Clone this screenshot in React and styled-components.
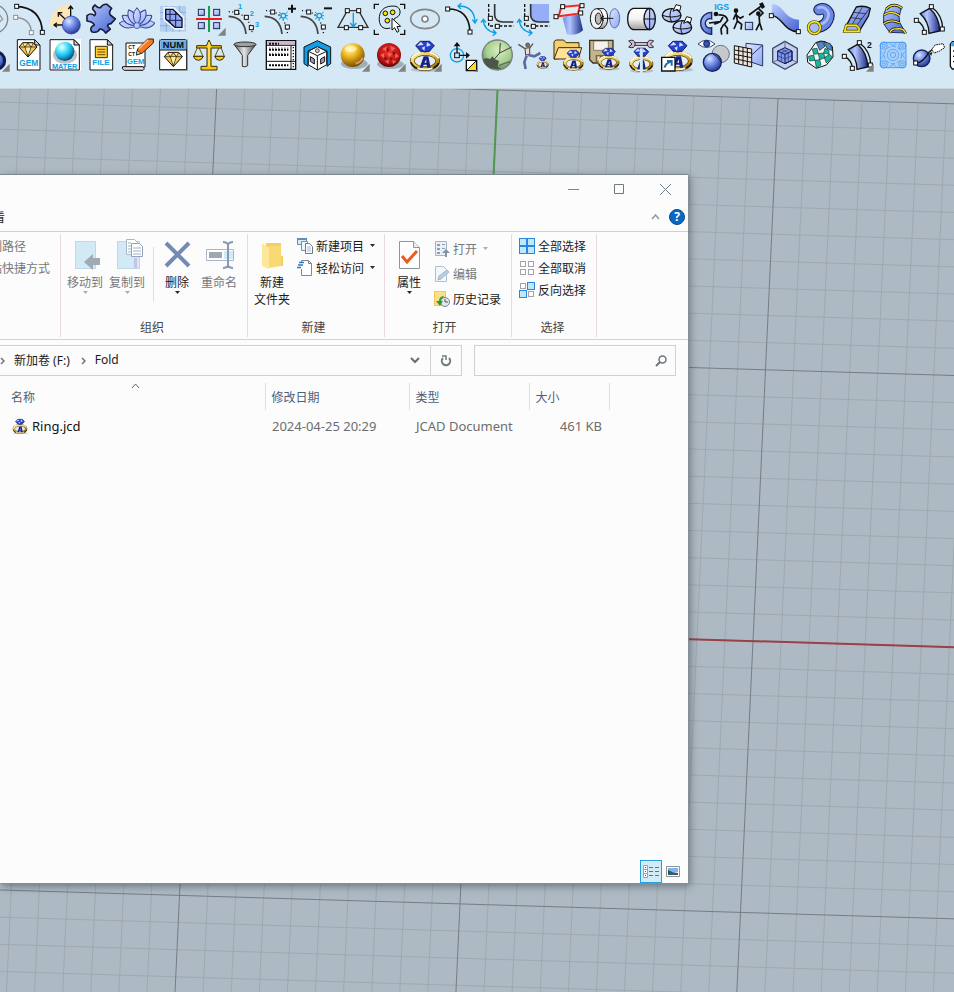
import styled, { createGlobalStyle, css } from "styled-components";

const GlobalStyle = createGlobalStyle`
  * {
    box-sizing: border-box;
  }

  body {
    margin: 0;
    font-family: "Noto Sans", "Noto Sans CJK SC", sans-serif;
    font-size: 12px;
    color: #1b1b1b;
  }

  button {
    margin: 0;
    padding: 0;
    border: 0;
    background: none;
    color: inherit;
    font: inherit;
  }
`;

/* ---------- layout ---------- */

const Page = styled.div`
  display: flex;
  flex-direction: column;
  min-height: 100vh;
  overflow: hidden;
`;

const Toolbar = styled.header`
  padding: 1px 0 15px;
  background: #d4e8f5;
  border-bottom: 1px solid #c9d2d5;
  overflow: hidden;
`;

const ToolRow = styled.div`
  display: flex;
  height: 36px;
  margin-left: -25px;
`;

const Tool = styled.button`
  flex: 0 0 36px;
  height: 36px;

  svg {
    display: block;
    width: 36px;
    height: 36px;
  }
`;

const Viewport = styled.main`
  position: relative;
  display: flex;
  flex: 1;
  padding: 85px 266px 109px 0;
  background: #adbac3;
`;

const GridSvg = styled.svg`
  position: absolute;
  inset: 0;
  width: 100%;
  height: 100%;
`;

const Explorer = styled.section`
  position: relative;
  display: flex;
  flex: 1;
  flex-direction: column;
  min-width: 0;
  background: #fcfcfc;
  border-top: 1px solid #7d888f;
  box-shadow: 1px 1px 0 #858f95, 2px 3px 8px rgba(40, 50, 60, 0.5);
`;

const TitleBar = styled.div`
  display: flex;
  justify-content: flex-end;
  height: 28px;
`;

const CaptionButton = styled.button`
  width: 46px;

  svg {
    display: block;
    margin: 0 auto;
  }
`;

const TabRow = styled.div`
  display: flex;
  align-items: center;
  height: 29px;
  padding-right: 2px;
  border-bottom: 1px solid #ccd1d4;
`;

const Tab = styled.button`
  margin-left: -19px;
  margin-right: auto;
`;

const TabTool = styled.button`
  display: flex;
  align-items: center;
  justify-content: center;
  width: 22px;
  height: 22px;
  padding-left: 4px;
`;

const Ribbon = styled.div`
  display: flex;
  height: 108px;
  padding: 2px 0;
  border-bottom: 1px solid #d0d5d6;
`;

const Group = styled.div`
  display: flex;
  flex-direction: column;
  flex: none;
  padding: 1px ${(p) => p.$right || 10}px 0 ${(p) => p.$left || 3}px;
  border-right: 1px solid #ead9df;
`;

const ClippedGroup = styled(Group)`
  align-items: flex-end;
  width: 61px;
  padding-left: 0;
  overflow: hidden;
`;

const GroupBody = styled.div`
  display: flex;
  flex: 1;
`;

const GroupName = styled.div`
  height: 18px;
  line-height: 18px;
  color: #444;
  text-align: center;
`;

const dim = css`
  color: #77787a;
`;

const BigButton = styled.button`
  display: flex;
  flex-direction: column;
  align-items: center;
  width: 42px;
  padding-top: 3px;
  line-height: 17px;
  white-space: nowrap;
  ${(p) => p.$dim && dim}

  > svg:first-child {
    flex: none;
    margin-bottom: 4px;
  }
`;

const Divider = styled.div`
  width: 1px;
  height: 55px;
  margin: 12px 2px 0 5px;
  background: #ead9df;
`;

const SmallList = styled.div`
  display: flex;
  flex-direction: column;
  align-items: ${(p) => (p.$end ? "flex-end" : "flex-start")};
  margin-left: ${(p) => p.$gap || 0}px;
  padding-top: ${(p) => (p.$tall ? 1 : 0)}px;
`;

const SmallButton = styled.button`
  display: flex;
  align-items: center;
  gap: 3px;
  height: ${(p) => (p.$tall ? 25 : 22)}px;
  padding-right: ${(p) => p.$inset || 0}px;
  white-space: nowrap;
  ${(p) => p.$dim && dim}
`;

const NavRow = styled.div`
  display: flex;
  gap: 12px;
  padding: 5px 12px 7px 0;
`;

const AddressBar = styled.nav`
  display: flex;
  align-items: center;
  flex: 1;
  height: 31px;
  border: 1px solid #d0d1d6;
  border-left: 0;
`;

const Crumb = styled.a`
  margin: 0 11px 0 9px;
  padding-bottom: 2px;
  color: #1b1b1b;
  text-decoration: none;
`;

const AddressButton = styled.button`
  display: flex;
  align-items: center;
  justify-content: center;
  align-self: stretch;
  width: 31px;
  margin-left: ${(p) => (p.$push ? "auto" : 0)};
  border-left: ${(p) => (p.$push ? 0 : 1)}px solid #d0d1d6;
`;

const SearchBox = styled.label`
  display: flex;
  align-items: center;
  width: 202px;
  padding-right: 8px;
  border: 1px solid #d0d1d6;
`;

const SearchInput = styled.input`
  flex: 1;
  min-width: 0;
  border: 0;
  outline: 0;
  background: none;
  font: inherit;
`;

const FileTable = styled.table`
  width: 100%;
  table-layout: fixed;
  border-collapse: collapse;
`;

const HeadCell = styled.th`
  position: relative;
  width: ${(p) => p.$width || "auto"};
  height: 27px;
  padding: 0 0 0 ${(p) => (p.$first ? 11 : 6)}px;
  border-right: ${(p) => (p.$last ? 0 : 1)}px solid #ead9df;
  color: #4c607a;
  font-weight: normal;
  text-align: left;
`;

const SortMark = styled.svg`
  position: absolute;
  top: 0;
  left: 131px;
`;

const Cell = styled.td`
  height: 32px;
  padding: 0 7px;
  color: #6d6d6d;
  font-size: 13px;
  text-align: ${(p) => (p.$right ? "right" : "left")};
  white-space: nowrap;
`;

const FileName = styled.a`
  display: flex;
  align-items: center;
  gap: 4px;
  padding-left: 5px;
  color: #111;
  text-decoration: none;
`;

const StatusBar = styled.footer`
  display: flex;
  justify-content: flex-end;
  margin-top: auto;
  padding-right: 4px;
`;

const ViewButton = styled.button`
  display: flex;
  align-items: center;
  justify-content: center;
  width: 22px;
  height: 23px;
  background: ${(p) => (p.$active ? "#d3ebf7" : "none")};
  border: 1px solid ${(p) => (p.$active ? "#26a0da" : "transparent")};
`;

/* ---------- construction plane ---------- */

const ORIGIN = [497.5, 1];
const H = [28.05, 0.85];
const V = [-1.25, 27.13];

const at = (i, j) => [
  ORIGIN[0] + i * H[0] + j * V[0],
  ORIGIN[1] + i * H[1] + j * V[1],
];

const range = (from, to) =>
  Array.from({ length: to - from + 1 }, (_, n) => from + n);

function GridLine({ from, to, color, width = 1 }) {
  const [x1, y1] = at(...from);
  const [x2, y2] = at(...to);
  return <line x1={x1} y1={y1} x2={x2} y2={y2} stroke={color} strokeWidth={width} />;
}

const MINOR = "#9ea9b0";
const MAJOR = "#777c86";

function ConstructionPlane() {
  const cols = range(-20, 60);
  const rows = range(0, 50);
  const minor = (n) => n % 10 !== 0;
  const major = (n) => n % 10 === 0;
  return (
    <GridSvg aria-hidden="true">
      <defs>
        <linearGradient id="blue" x1="0" y1="0" x2="1" y2="1">
          <stop offset="0" stopColor="#b9ccff" />
          <stop offset="1" stopColor="#4360cf" />
        </linearGradient>
        <linearGradient id="pale" x1="0" y1="0" x2="1" y2="1">
          <stop offset="0" stopColor="#dfe8ff" />
          <stop offset="1" stopColor="#8da6f4" />
        </linearGradient>
        <linearGradient id="tube" x1="0" y1="0" x2="1" y2="0">
          <stop offset="0" stopColor="#6f8de8" />
          <stop offset="0.35" stopColor="#b4c5ff" />
          <stop offset="1" stopColor="#1c2c86" />
        </linearGradient>
        <linearGradient id="steel" x1="0" y1="0" x2="1" y2="0">
          <stop offset="0" stopColor="#555" />
          <stop offset="0.45" stopColor="#e4e4e4" />
          <stop offset="1" stopColor="#4c4c4c" />
        </linearGradient>
        <linearGradient id="barrel" x1="0" y1="0" x2="0" y2="1">
          <stop offset="0" stopColor="#fff" />
          <stop offset="0.5" stopColor="#f4f4f4" />
          <stop offset="1" stopColor="#9c9c9c" />
        </linearGradient>
        <linearGradient id="gold" x1="0" y1="0" x2="1" y2="1">
          <stop offset="0" stopColor="#fff6b0" />
          <stop offset="0.5" stopColor="#e3bb3a" />
          <stop offset="1" stopColor="#8b6200" />
        </linearGradient>
        <radialGradient id="ball" cx="0.35" cy="0.3" r="0.75">
          <stop offset="0" stopColor="#dbe6ff" />
          <stop offset="0.4" stopColor="#7c98f2" />
          <stop offset="1" stopColor="#20348e" />
        </radialGradient>
        <radialGradient id="goldBall" cx="0.38" cy="0.25" r="0.8">
          <stop offset="0" stopColor="#fff7b8" />
          <stop offset="0.4" stopColor="#efb91f" />
          <stop offset="1" stopColor="#6b4200" />
        </radialGradient>
        <radialGradient id="redBall" cx="0.5" cy="0.4" r="0.6">
          <stop offset="0" stopColor="#ee3a30" />
          <stop offset="0.7" stopColor="#bb1414" />
          <stop offset="1" stopColor="#5d0303" />
        </radialGradient>
        <radialGradient id="cyanBall" cx="0.35" cy="0.28" r="0.75">
          <stop offset="0" stopColor="#fff" />
          <stop offset="0.25" stopColor="#7df2ff" />
          <stop offset="0.65" stopColor="#17b3e6" />
          <stop offset="1" stopColor="#034a74" />
        </radialGradient>
        <radialGradient id="greenBall" cx="0.55" cy="0.35" r="0.7">
          <stop offset="0" stopColor="#d9efc0" />
          <stop offset="0.6" stopColor="#a6cd90" />
          <stop offset="1" stopColor="#54774e" />
        </radialGradient>
      </defs>
      {cols.filter(minor).map((i) => (
        <GridLine key={`c${i}`} from={[i, 0]} to={[i, 50]} color={MINOR} />
      ))}
      {rows.filter(minor).map((j) => (
        <GridLine key={`r${j}`} from={[-20, j]} to={[60, j]} color={MINOR} />
      ))}
      {cols.filter(major).map((i) => (
        <GridLine key={`c${i}`} from={[i, 0]} to={[i, 50]} color={MAJOR} />
      ))}
      {rows.filter(major).map((j) => (
        <GridLine key={`r${j}`} from={[-20, j]} to={[60, j]} color={MAJOR} />
      ))}
      <GridLine from={[0, 20]} to={[60, 20]} color="#9c4048" width={2} />
      <GridLine from={[0, 0]} to={[0, 20]} color="#4f9a50" width={2} />
    </GridSvg>
  );
}

/* ---------- tool icons, drawn on a 108 unit square ---------- */

const BLACK = "#111";
const CYAN = "#0a9fe4";

const line = { fill: "none", stroke: BLACK, strokeWidth: 4 };
const cyan = { fill: "none", stroke: CYAN, strokeWidth: 4 };

function Handles({ points, color = BLACK }) {
  return points.map(([x, y]) => (
    <rect key={`${x}-${y}`} x={x - 6} y={y - 6} width="12" height="12" fill="#fff" stroke={color} strokeWidth="3" />
  ));
}

const Flyout = () => <path d="M104 80v24H81z" fill="#828282" />;

function Label({ x, y, size = 24, color = CYAN, children }) {
  return (
    <text x={x} y={y} fill={color} fontSize={size} fontWeight="bold" fontFamily="Liberation Sans, sans-serif" textAnchor="middle">
      {children}
    </text>
  );
}

function Ring({ x = 54, y = 54, s = 1 }) {
  return (
    <g transform={`translate(${x} ${y}) scale(${s})`}>
      <ellipse cx="2" cy="42" rx="44" ry="7" fill="#8f989d" opacity="0.5" />
      <ellipse cx="0" cy="16" rx="38" ry="23" fill="#e9edf0" stroke="#4a380c" strokeWidth="14" />
      <ellipse cx="0" cy="16" rx="38" ry="23" fill="none" stroke="url(#gold)" strokeWidth="10" />
      <path d="M-41 8Q-32 -8 -14 -10M14 -10Q36 -4 41 8M-22 38Q0 44 22 38" stroke="#fffde4" strokeWidth="5" fill="none" />
      <path d="M-42 20Q-36 34 -24 38M26 36Q38 32 41 22" stroke="#241803" strokeWidth="5" fill="none" />
      <path d="M-16 36L-4 2H10L17 36H7L5 27H-4L-7 36z" fill="#152088" />
      <path d="M-2 21H4L4 11z" fill="#e9edf0" />
      <path d="M-28 -30L-14 -43H14L28 -30L14 -14Q0 -8 -14 -14z" fill="#2440cc" stroke="#141d66" strokeWidth="3" />
      <path d="M-12 -42L-4 -32L-24 -30zM6 -41L18 -31L4 -27zM-10 -24L0 -28L-2 -14z" fill="#d3ddff" />
    </g>
  );
}

function Gem({ x, y }) {
  return (
    <g transform={`translate(${x} ${y})`} stroke={BLACK} strokeWidth="3" strokeLinejoin="round">
      <path d="M-27 -8L-16 -21H16L27 -8L0 22z" fill="#f4c955" />
      <path d="M-27 -8H27M-16 -20L-9 -8L0 20L9 -8L16 -20M-9 -8L0 -20L9 -8" fill="none" strokeWidth="2" />
      <path d="M-7 -6H7L0 14zM-14 -18H-4L-10 -11zM4 -18H12L10 -11z" fill="#fff0b8" stroke="none" />
    </g>
  );
}

const Doc = ({ x = 19, w = 68 }) => (
  <>
    <path d={`M${x} 8h${w - 16}l16 16v75h${-w}z`} fill="#fff" stroke={BLACK} strokeWidth="3" />
    <path d={`M${x + w - 16} 8v16h16z`} fill="#ccc" stroke={BLACK} strokeWidth="3" />
  </>
);

const Sweep = ({ mark }) => (
  <>
    <path d="M9 29Q66 30 74 101" {...line} strokeDasharray="3 7" />
    <path d="M5 46Q52 48 57 99" {...line} stroke="#444" strokeWidth="5" />
    <Handles points={[[29, 33], [73, 78]]} />
    <circle cx="61" cy="44" r="7" {...cyan} />
    <path d="M48 33l6 5M74 33l-6 5M48 55l6-5M74 55l-6-5M47 44h6M69 44h6" {...cyan} strokeWidth="3" />
    <path d={mark} stroke={BLACK} strokeWidth="6" />
  </>
);

const Corner = ({ filled }) => (
  <>
    {filled && <path d="M46 9H102V64H68Q46 60 46 42z" fill="#96adf7" />}
    <path d="M29 9V75H104" {...line} strokeDasharray="9 5" />
    <path d="M47 9V42Q48 62 72 63H103" {...line} stroke="#333" strokeWidth="5" />
    <Handles points={[[34, 52], [55, 76]]} />
    <path d="M13 56Q14 88 50 96M6 65l7-10 8 9M42 86l9 10-10 8" {...cyan} />
  </>
);

const Band = () => (
  <>
    <path d="M28 38L56 22Q86 50 86 90L54 97Q54 62 28 38z" fill="url(#tube)" stroke={BLACK} strokeWidth="4" />
    <path d="M62 18Q94 42 95 82M17 58Q38 70 40 92" {...line} />
    <Handles points={[[61, 17], [94, 84], [16, 58], [40, 94]]} />
  </>
);

const topTools = [
  ["圆", <>
    <circle cx="55" cy="54" r="43" {...line} stroke="#858585" />
    <path d="M70 36L83 54L67 70" {...line} stroke="#999" />
  </>],
  ["弧线", <>
    <path d="M17 16Q90 20 94 92" {...line} strokeWidth="5" />
    <path d="M14 49Q58 52 61 92" {...line} stroke="#8c8c8c" />
    <Handles points={[[17, 16], [94, 94]]} />
    <Handles points={[[14, 49], [61, 95]]} color="#8c8c8c" />
  </>],
  ["旋转", <>
    <path d="M9 76Q10 12 73 10V76z" fill="#fde5b5" />
    <path d="M71 70V17M71 70L35 36M71 72H22M64 24l7-9 7 9M34 47V35h12M30 65l-9 7 9 7" {...line} />
    <circle cx="73" cy="72" r="27" fill="url(#ball)" stroke="#243a9c" strokeWidth="2" />
  </>],
  ["拼接", <path d="M36 12Q44 22 52 20Q60 8 72 10L86 22Q76 34 82 42L97 54L84 68Q74 68 74 76L82 84L68 96Q60 84 50 84Q44 98 26 92Q18 80 34 72Q30 62 12 60L12 44Q24 34 34 44Q42 38 32 28Q24 22 36 12z" fill="url(#blue)" stroke="#1c1f3a" strokeWidth="5" strokeLinejoin="round" />],
  ["莲花", <>
    {[-82, 82, -56, 56, -28, 28, 0].map((a) => (
      <path key={a} d="M54 20Q76 42 54 74Q32 42 54 20" transform={`rotate(${a} 54 74)`} fill="url(#pale)" stroke="#33449c" strokeWidth="3" />
    ))}
    <circle cx="54" cy="74" r="9" fill="url(#pale)" stroke="#33449c" strokeWidth="2" />
  </>],
  ["网格", <>
    <path d="M15 15H93V92H15z" fill="#b5cff0" />
    <path d="M34 15V92M54 15V92M74 15V92M15 34H93M15 54H93M15 74H93" stroke="#89addd" strokeWidth="3" />
    <path d="M25 18H58L88 48V86H58L25 58z" fill="#eef4ff" />
    <path d="M32 25H54L81 52V79H60L32 54z" fill="#8ea5f4" stroke={BLACK} strokeWidth="4" />
    <path d="M45 25V65M62 34V79M32 40H68M34 58H81" stroke="#151c50" strokeWidth="3" />
  </>],
  ["阵列", <>
    {[[31, 34], [77, 34], [31, 74], [77, 74]].map(([x, y]) => (
      <rect key={`${x}${y}`} x={x - 9} y={y - 9} width="18" height="18" fill="url(#pale)" stroke="#20284f" strokeWidth="3" />
    ))}
    <path d="M54 15V93" stroke="#17a04a" strokeWidth="6" />
    <path d="M15 54H93" stroke="#ed1c24" strokeWidth="6" />
    <Flyout />
  </>],
  ["编号点", <>
    <path d="M5 32Q70 34 76 101" {...line} strokeDasharray="3 7" />
    <path d="M5 46Q52 48 57 99" {...line} stroke="#444" strokeWidth="5" />
    <Handles points={[[29, 34], [58, 49], [73, 80]]} />
    <Label x={39} y={23} size={22}>1</Label>
    <Label x={74} y={45} size={22}>2</Label>
    <Label x={90} y={79} size={22}>3</Label>
  </>],
  ["加点", <Sweep mark="M75 23H99M87 11V35" />],
  ["减点", <Sweep mark="M75 22H99" />],
  ["投影", <>
    <path d="M37 29H71L99 79H9z" {...line} stroke="#333" />
    <path d="M55 35V76M46 66l9 11 9-11" {...cyan} />
    <Handles points={[[37, 29], [71, 29], [34, 80], [77, 80]]} />
  </>],
  ["选取", <>
    <path d="M10 24V10H24M87 10H101V24M10 86V100H24M87 100H101V86" {...line} />
    <path d="M58 81C28 90 20 62 27 38C34 18 56 13 75 16C92 22 90 44 77 49Q66 52 69 64" {...line} strokeWidth="3" />
    <circle cx="43" cy="37" r="7" fill="#f7e600" stroke={BLACK} strokeWidth="3" />
    <circle cx="65" cy="34" r="7" fill="#f7e600" stroke={BLACK} strokeWidth="3" />
    <circle cx="49" cy="59" r="7" fill="#f7e600" stroke={BLACK} strokeWidth="3" />
    <path d="M63 52V87L71 80L78 94L84 90L78 77L89 76z" fill="#fff" stroke={BLACK} strokeWidth="3" />
  </>],
  ["椭圆", <>
    <ellipse cx="54" cy="54" rx="43" ry="29" {...line} stroke="#868686" strokeWidth="5" />
    <circle cx="54" cy="54" r="9" fill="#fff" stroke="#868686" strokeWidth="5" />
  </>],
  ["曲线", <>
    <path d="M15 24Q78 24 81 92" {...line} strokeWidth="5" />
    <path d="M45 15Q94 14 96 64M55 7L45 15L54 24M88 56L96 66L103 54" {...cyan} />
    <Handles points={[[14, 24], [81, 93]]} />
  </>],
  ["圆角", <Corner />],
  ["填充圆角", <Corner filled />],
  ["拉伸", <>
    <path d="M35 51Q62 34 86 44L96 88Q76 106 48 100z" fill="url(#tube)" />
    <path d="M31 18L87 13L81 38L23 46z" fill="#e6eaf0" stroke="#f1281e" strokeWidth="6" />
    <Handles points={[[35, 17], [93, 14], [15, 47], [89, 36]]} />
  </>],
  ["切割管", <>
    <path d="M31 23H50Q62 30 62 52T48 82H31z" fill="url(#barrel)" stroke={BLACK} strokeWidth="3" />
    <ellipse cx="29" cy="53" rx="19" ry="30" fill="#f2f2f2" stroke={BLACK} strokeWidth="3" />
    <ellipse cx="34" cy="53" rx="9" ry="17" fill="#b9b9b9" stroke={BLACK} strokeWidth="3" />
    <ellipse cx="83" cy="52" rx="15" ry="29" fill="url(#pale)" stroke="#5f6ca8" strokeWidth="3" />
    <path d="M79 52H43M51 45L41 52L51 59" {...line} strokeWidth="3" />
  </>],
  ["圆柱", <>
    <path d="M30 22H80V86H30Q14 80 14 54T30 22z" fill="url(#barrel)" stroke={BLACK} strokeWidth="4" />
    <ellipse cx="80" cy="54" rx="17" ry="32" fill="url(#pale)" stroke={BLACK} strokeWidth="4" />
    <path d="M80 22V86M63 54H97" {...line} strokeWidth="3" />
  </>],
  ["球体映射", <>
    {[[38, 43], [70, 79]].map(([x, y]) => (
      <g key={x}>
        <ellipse cx={x} cy={y} rx="28" ry="20" fill="url(#pale)" stroke={BLACK} strokeWidth="4" />
        <path d={`M${x} ${y - 20}Q${x - 10} ${y} ${x} ${y + 20}M${x - 28} ${y}Q${x} ${y + 10} ${x + 28} ${y}`} {...line} strokeWidth="3" />
        <path d={`M${x + 4} ${y - 12}L${x + 13} ${y - 32}L${x + 28} ${y - 28}L${x + 24} ${y - 13}L${x + 16} ${y - 18}z`} fill="#fff" stroke={BLACK} strokeWidth="3" />
      </g>
    ))}
  </>],
  ["导入IGS", <>
    <path d="M50 34A33 33 0 1 0 50 100V80A14 14 0 1 1 50 54z" fill="url(#blue)" stroke="#18265e" strokeWidth="4" />
    <circle cx="63" cy="39" r="7" fill={BLACK} />
    <path d="M70 42Q94 40 98 58L88 70L97 82V100M86 70L78 84L80 101M84 48L76 62L42 66M76 62L58 70" {...line} strokeWidth="5" />
    <Label x={80} y={27} size={26}>IGS</Label>
  </>],
  ["敲打", <>
    <circle cx="15" cy="29" r="7" fill={BLACK} />
    <path d="M15 36L19 60L9 84M19 60L32 70L30 86M15 42L28 52L38 46M14 40L7 56" {...line} strokeWidth="5" />
    <rect x="43" y="64" width="22" height="22" fill="url(#pale)" stroke="#20284f" strokeWidth="3" />
    <circle cx="82" cy="38" r="7" fill={BLACK} />
    <path d="M84 44L86 66L75 88M86 66L93 88M84 48L96 36L82 22M54 42L92 14" {...line} strokeWidth="5" />
    <path d="M84 8L93 24L102 18L95 4z" fill={BLACK} />
  </>],
  ["曲面带", <>
    <path d="M15 10C46 4 52 56 96 56V94C48 92 46 46 14 44z" fill="url(#blue)" />
    <path d="M14 43C46 46 48 90 94 93" {...line} strokeWidth="4" />
    <Handles points={[[13, 44], [94, 92]]} />
  </>],
  ["管道", <>
    <path d="M48 26C66 18 86 34 74 58Q66 76 40 80" fill="none" stroke="#16204f" strokeWidth="34" strokeLinecap="round" />
    <path d="M48 26C66 18 86 34 74 58Q66 76 40 80" fill="none" stroke="#6c86e6" strokeWidth="28" strokeLinecap="round" />
    <path d="M46 20C66 14 86 34 72 56Q64 68 44 72" fill="none" stroke="#a9bcff" strokeWidth="8" strokeLinecap="round" />
    <circle cx="34" cy="80" r="18" fill="#a7baf8" stroke="#4c4200" strokeWidth="9" />
    <circle cx="34" cy="80" r="18" fill="none" stroke="#f8e71c" strokeWidth="5" />
  </>],
  ["放样", <>
    <path d="M16 88L24 70L52 18Q74 12 94 22L88 46L60 92z" fill="url(#blue)" stroke={BLACK} strokeWidth="4" />
    <path d="M36 50L68 54M44 34L80 38M92 22L54 72M70 18L40 70" {...line} strokeWidth="2" />
    <path d="M17 91L22 73H52L60 81V91z" fill="#9db4fa" stroke="#4c4200" strokeWidth="9" />
    <path d="M17 91L22 73H52L60 81V91z" fill="none" stroke="#f8e71c" strokeWidth="5" />
  </>],
  ["肋骨放样", <>
    <path d="M34 20Q56 2 80 18L72 46L74 64L92 96L44 94L26 68L26 42z" fill="url(#blue)" stroke="#1d2b70" strokeWidth="3" />
    {["M34 24Q56 2 82 22", "M26 42Q50 26 74 44", "M26 68Q48 52 74 66", "M44 96Q50 82 64 84Q86 80 92 98"].map((d) => (
      <g key={d} fill="none">
        <path d={d} stroke={BLACK} strokeWidth="8" />
        <path d={d} stroke="#f8e71c" strokeWidth="4" />
      </g>
    ))}
  </>],
  ["弯曲面", <Band />],
];

const bottomTools = [
  ["戒圈", <>
    <circle cx="63" cy="71" r="26" fill="url(#ball)" stroke="#111a52" strokeWidth="9" />
    <Flyout />
  </>],
  ["宝石文件", <>
    <Doc />
    <Gem x={51} y={38} />
    <Label x={53} y={86} size={25}>GEM</Label>
  </>],
  ["材质", <>
    <rect x="6" y="6" width="96" height="96" fill="#fff" />
    <Doc x={9} w={88} />
    <ellipse cx="54" cy="54" rx="36" ry="26" fill="#777" opacity="0.45" />
    <circle cx="53" cy="43" r="29" fill="url(#cyanBall)" />
    <Label x={53} y={95} size={22}>MATER</Label>
  </>],
  ["文件", <>
    <Doc x={21} />
    <path d="M37 28H73V62H37z" fill="#f9cf3c" stroke="#3c2b00" strokeWidth="3" />
    <path d="M43 37H67M43 45H67M43 53H67" stroke="#7c4a00" strokeWidth="3" />
    <Label x={54} y={85} size={24}>FILE</Label>
  </>],
  ["宝石清单", <>
    <path d="M21 18H78V90H21z" fill="#fff" stroke={BLACK} strokeWidth="3" />
    <path d="M11 89H70Q80 93 72 100H16Q6 95 11 89z" fill="#ddd3dd" stroke={BLACK} strokeWidth="3" />
    <Label x={38} y={37} size={15} color={BLACK}>CT</Label>
    <Label x={38} y={56} size={15} color={BLACK}>CT</Label>
    <Label x={50} y={82} size={23}>GEM</Label>
    <path d="M52 54L56 36L86 6H103V18L70 48z" fill="#f47920" stroke="#3a1c05" strokeWidth="3" />
    <path d="M60 35L88 8" stroke="#ffc48a" strokeWidth="4" />
    <path d="M52 54L55 40L66 49z" fill="#f8d9a5" stroke={BLACK} strokeWidth="2" />
  </>],
  ["宝石数量", <>
    <rect x="12" y="6" width="87" height="96" fill="#a9b7c1" />
    <path d="M14 12L18 8H91L95 12V98H14z" fill="#fff" stroke={BLACK} strokeWidth="3" />
    <path d="M16 10H94V38H16z" fill="#66acef" />
    <path d="M14 39H96" {...line} strokeWidth="3" />
    <Label x={55} y={34} size={28} color={BLACK}>NUM</Label>
    <Gem x={55} y={67} />
  </>],
  ["称重", <>
    <path d="M19 32L8 58H36L24 32M84 32L72 58H100L90 32" {...line} stroke="#6d5200" strokeWidth="3" />
    <path d="M17 26H46L54 9L62 26H91V33H60V88H78V99H30V88H48V33H17z" fill="#f7c80e" stroke="#3c2c00" strokeWidth="3" />
    <path d="M7 58H37Q32 70 22 70T7 58zM71 58H101Q96 70 86 70T71 58z" fill="#f7c80e" stroke="#3c2c00" strokeWidth="3" />
    <path d="M54 16V88" stroke="#fff2a2" strokeWidth="3" />
  </>],
  ["筛选", <>
    <path d="M21 22L46 55V88Q54 92 62 86V55L87 22z" fill="url(#steel)" stroke="#333" strokeWidth="3" />
    <ellipse cx="54" cy="22" rx="33" ry="7" fill="#a0a0a0" stroke="#333" strokeWidth="3" />
  </>],
  ["列表", <>
    <path d="M10 11H98V97H10z" fill="#fff" stroke={BLACK} strokeWidth="4" />
    <path d="M12 13H96V23H12z" fill="#cbb6d0" />
    <path d="M10 25H98M10 73H98M84 25V97" {...line} strokeWidth="3" />
    <path d="M18 20H48M18 38H76M18 54H76M18 85H76" {...line} strokeWidth="6" strokeDasharray="6 3" />
    <path d="M18 33H76M18 49H76" {...line} strokeWidth="2" strokeDasharray="4 5" />
    <path d="M91 30V70M91 78V94" {...line} strokeDasharray="4 5" />
  </>],
  ["立方体", <>
    <path d="M55 11L95 30V80L84 88V42L55 30L27 42V88L15 80V30z" fill="#109ee8" stroke={BLACK} strokeWidth="3" />
    <path d="M55 29L83 43V83L55 99L28 83V43z" fill="#fff" stroke={BLACK} strokeWidth="3" />
    <path d="M28 43L55 56L83 43M55 56V99" {...line} strokeWidth="3" />
    <circle cx="55" cy="41" r="6" fill="#c8bcd8" stroke={BLACK} strokeWidth="2" />
    <path d="M34 59L46 66V81L34 73zM65 66L77 59V74L65 81z" fill="#a998c7" stroke={BLACK} strokeWidth="3" />
  </>],
  ["黄金材质", <>
    <ellipse cx="58" cy="80" rx="40" ry="16" fill="#6d7477" opacity="0.5" />
    <circle cx="53" cy="54" r="36" fill="url(#goldBall)" />
    <ellipse cx="47" cy="36" rx="18" ry="10" fill="#fff8d0" opacity="0.65" />
    <path d="M62 80Q78 76 84 62" stroke="#f7a58a" strokeWidth="6" fill="none" opacity="0.8" />
    <Flyout />
  </>],
  ["红宝石材质", <>
    <ellipse cx="58" cy="82" rx="40" ry="14" fill="#6d7477" opacity="0.5" />
    <circle cx="54" cy="54" r="36" fill="url(#redBall)" />
    <path d="M34 36L48 28L44 42zM58 26L74 34L62 42zM28 54L40 48L38 64zM50 48L64 50L54 60zM74 48L84 58L72 64zM42 72L54 68L52 82zM64 70L76 72L66 82z" fill="#ff7a6c" opacity="0.75" />
    <path d="M48 30L56 40L48 46zM64 44L74 46L68 56zM38 66L46 58L48 68zM58 60L66 66L58 70z" fill="#6d0505" opacity="0.8" />
    <Flyout />
  </>],
  ["戒指", <>
    <Ring x={54} y={56} />
    <Flyout />
  </>],
  ["操作轴", <>
    <circle cx="42" cy="55" r="20" {...cyan} />
    <path d="M42 55V20M42 55H78" {...line} />
    <path d="M32 28L42 15L52 28zM69 45L81 55L69 65z" fill={BLACK} />
    <rect x="35" y="48" width="14" height="14" fill="#d7e2ff" stroke={BLACK} strokeWidth="3" />
    <path d="M70 70H101V101H70z" fill="#fff" stroke={BLACK} strokeWidth="4" />
    <path d="M99 72V99H72z" fill="#f8df1a" />
    <path d="M99 72L72 99" {...line} strokeWidth="3" />
    <path d="M97 102l8-8v10h-10z" fill="#777" />
  </>],
  ["渲染球", <>
    <circle cx="55" cy="54" r="45" fill="url(#greenBall)" stroke="#7a817e" strokeWidth="4" />
    <path d="M12 66Q24 62 34 66L40 58L46 66L60 72L56 88L66 97L34 94Q14 84 12 66z" fill="#4b5648" />
    <path d="M46 66L62 48L98 30M62 48L64 18" stroke="#39423a" strokeWidth="3" fill="none" />
    <path d="M60 86Q76 78 94 74" stroke="#5d7453" strokeWidth="5" fill="none" />
  </>],
  ["快速动作", <>
    <circle cx="38" cy="24" r="6" fill="#8e6d62" stroke="#333" strokeWidth="2" />
    <path d="M30 34L44 32L44 52L32 54z" fill="#f3d9c9" stroke="#444" strokeWidth="3" />
    <path d="M30 35L10 22M44 33L54 20" {...line} stroke="#55555f" strokeWidth="4" />
    <path d="M35 56L28 76L32 96M40 54L58 58L76 48" {...line} stroke="#5f68a5" strokeWidth="8" />
    <Ring x={83} y={76} s={0.4} />
  </>],
  ["打开文件", <>
    <path d="M9 66V14L15 9H38L45 17H84V60z" fill="#f4cf70" stroke="#3f2c00" strokeWidth="3" />
    <path d="M9 66L22 32H92L82 66z" fill="#ffe19a" stroke="#3f2c00" strokeWidth="3" />
    <Ring x={67} y={69} s={0.68} />
  </>],
  ["保存文件", <>
    <path d="M8 10H78V78H18L8 68z" fill="#c3b48c" stroke="#3a311e" strokeWidth="4" />
    <path d="M20 12H64V40H20z" fill="#f4f2ef" stroke="#5d533e" strokeWidth="2" />
    <path d="M26 54H58V77H26z" fill="#786749" />
    <path d="M31 58H38V73H31z" fill="#e9e4da" />
    <Ring x={65} y={65} s={0.72} />
  </>],
  ["修复", <>
    <path d="M29 21H80" stroke="#2c2232" strokeWidth="11" />
    <path d="M29 21H80" stroke="#d6b9ce" strokeWidth="6" />
    <path d="M17 12Q34 4 37 21Q34 37 17 30L27 21zM92 12Q76 4 72 21Q76 37 92 30L82 21z" fill="#d6b9ce" stroke="#2c2232" strokeWidth="3" />
    <Ring x={55} y={68} s={0.8} />
    <path d="M55 34V108" stroke="#d4e8f5" strokeWidth="9" />
  </>],
  ["戒指链接", <>
    <Ring x={56} y={56} />
    <path d="M8 61H48V102H8z" fill="#fff" stroke={BLACK} strokeWidth="4" />
    <path d="M17 92Q18 80 36 73M24 72H38V86" fill="none" stroke="#1c6fa7" strokeWidth="6" />
  </>],
  ["显示隐藏", <>
    <circle cx="77" cy="51" r="26" fill="#c5c9ce" stroke="#70757b" strokeWidth="3" />
    <circle cx="52" cy="76" r="27" fill="url(#ball)" stroke="#17245f" strokeWidth="4" />
    <path d="M52 49Q70 58 78 76" {...line} stroke="#17245f" strokeWidth="3" />
    <path d="M9 21Q34 -2 60 21Q34 42 9 21z" fill="#fff" stroke="#3a4666" strokeWidth="3" />
    <circle cx="35" cy="20" r="9" fill="#2c57c4" stroke="#0c1a50" strokeWidth="3" />
  </>],
  ["网格面", <>
    <path d="M45 19L95 24V87L45 70z" fill="url(#pale)" stroke="#27356f" strokeWidth="3" />
    <path d="M45 70L95 24" stroke="#27356f" strokeWidth="3" />
    <path d="M10 26L62 36V90L10 78z" fill="#eee4dd" stroke="#111" strokeWidth="3" />
    <path d="M23 28V80M36 30V84M49 33V87M10 39L62 48M10 52L62 62M10 65L62 76" {...line} strokeWidth="3" />
  </>],
  ["体素", <>
    <path d="M54 13L91 34V76L54 97L17 76V34z" fill="#c2cff0" stroke="#414a66" strokeWidth="4" />
    <path d="M54 13V32M17 76L32 69M91 76L75 69" stroke="#69718c" strokeWidth="3" />
    <path d="M54 32L75 42V70L54 80L32 70V42z" fill="#8198ee" stroke="#121a4a" strokeWidth="3" />
    <path d="M32 42L54 52L75 42V70L54 80V52" {...line} stroke="#121a4a" strokeWidth="3" />
    <path d="M43 47V75M64 47V75M32 56L54 66L75 56M43 37L64 47M64 37L43 47" {...line} stroke="#27357c" strokeWidth="2" />
  </>],
  ["贴面", <>
    <path d="M12 54L38 17Q54 9 66 14L88 28L90 60L70 84L40 94L14 76z" fill="#f6f6f6" stroke={BLACK} strokeWidth="3" />
    <path d="M40 17L58 13L66 28L50 40zM62 14L82 20L90 42L72 34z" fill="#4f8bc9" stroke={BLACK} strokeWidth="2" />
    <path d="M28 36L42 34L46 50L32 52zM16 58L32 54L36 70L20 72zM46 50L62 48L66 62L50 68zM36 70L50 68L54 84L40 92zM64 62L80 52L88 60L70 78zM66 34L78 40L78 52L62 48z" fill="#1bb79b" stroke="#0f3d37" strokeWidth="2" />
  </>],
  ["弯曲面二", <>
    <Band />
    <Label x={91} y={32} size={26} color={BLACK}>2</Label>
    <Flyout />
  </>],
  ["花纹", <>
    <rect x="16" y="16" width="77" height="76" rx="9" fill="#a9d0fa" stroke="#4a9bf0" strokeWidth="3" />
    <g fill="none" stroke="#3f93ee" strokeWidth="2">
      <circle cx="54" cy="54" r="8" />
      <circle cx="54" cy="54" r="17" />
      <circle cx="54" cy="54" r="26" strokeDasharray="12 5" />
      {[[26, 26], [82, 26], [26, 82], [82, 82]].map(([x, y]) => (
        <g key={`${x}${y}`}>
          <circle cx={x} cy={y} r="5" />
          <circle cx={x} cy={y} r="11" />
        </g>
      ))}
      <path d="M44 18Q54 32 64 18M44 90Q54 76 64 90M18 44Q32 54 18 64M90 44Q76 54 90 64" />
    </g>
  </>],
  ["抓取", <>
    <circle cx="32" cy="64" r="25" fill="url(#ball)" stroke="#17245f" strokeWidth="4" />
    <path d="M12 80Q40 74 52 47L66 36" {...line} />
    <path d="M62 38L72 24L96 20L101 32L86 42L70 48z" fill="#fff" stroke={BLACK} strokeWidth="3" strokeDasharray="5 2" />
    <path d="M54 48l10-2-3 10z" fill={BLACK} />
    <Handles points={[[14, 78]]} />
  </>],
  ["面板", <>
    <path d="M16 14H104V96H16L10 88V22z" fill="#fff" stroke={BLACK} strokeWidth="4" />
    <path d="M13 16H104V28H13z" fill="#3ba1e8" />
    <path d="M18 42H60M18 58H60M18 74H60" {...line} />
  </>],
];

function ToolStrip({ tools }) {
  return (
    <ToolRow>
      {tools.map(([name, art]) => (
        <Tool key={name} type="button" aria-label={name}>
          <svg viewBox="0 0 108 108">{art}</svg>
        </Tool>
      ))}
    </ToolRow>
  );
}

/* ---------- explorer icons ---------- */

const Arrow = ({ color = "#2b2b2b" }) => (
  <svg width="7" height="4" viewBox="0 0 7 4">
    <path d="M1 0h5L3.500 3z" fill={color} />
  </svg>
);

const Icon32 = ({ children }) => (
  <svg width="32" height="32" viewBox="0 0 32 32">
    {children}
  </svg>
);

const Icon16 = ({ children }) => (
  <svg width="16" height="16" viewBox="0 0 16 16">
    {children}
  </svg>
);

const MoveIcon = () => (
  <Icon32>
    <path d="M6.500 3.500h20v27h-20z" fill="#d2e9f6" stroke="#c3d5e4" />
    <path d="M31 20v7h-7v5l-9-8 9-8v4z" fill="#a0aab4" />
  </Icon32>
);

const CopyIcon = () => (
  <Icon32>
    <path d="M6.500 3.500h22v27h-22z" fill="#d2e9f6" stroke="#c3d5e4" />
    <path d="M24.500 20v10" stroke="#c5c3e8" strokeWidth="3" />
    <path d="M15.500 1.500h8l3 3v12h-11z" fill="#fff" stroke="#a9b7ca" />
    <path d="M20.500 5.500h8l3 3v10h-11z" fill="#fff" stroke="#93a3b8" />
    <path d="M17 5h3M17 8h3M17 11h3M17 14h3M22 10h8M22 13h8M22 16h8" stroke="#9fb3cc" />
  </Icon32>
);

const DeleteIcon = () => (
  <Icon32>
    <path d="M5 5l23 23M28 5L5 28" stroke="#728ab5" strokeWidth="4" />
  </Icon32>
);

const RenameIcon = () => (
  <Icon32>
    <path d="M3.500 11.500h27v11h-27z" fill="#fff" stroke="#a6b7c8" />
    <path d="M21 13h9v8h-9z" fill="#d2e9f6" />
    <path d="M6 14h13v6H6z" fill="#9ea8b2" />
    <path d="M20 4q3 0 5 2 2-2 5-2M20 30q3 0 5-2 2 2 5 2M25 5v24" fill="none" stroke="#8799b4" strokeWidth="2" />
  </Icon32>
);

const NewFolderIcon = () => (
  <Icon32>
    <path d="M10 5h15v13h2v10H10z" fill="#f6cf5f" />
    <path d="M6 5l7 5v21l-7-3z" fill="#fde79b" />
    <path d="M13 10V8h12v20l-12 2z" fill="#f9d974" />
  </Icon32>
);

const PropertiesIcon = () => (
  <Icon32>
    <path d="M6.500 3.500h14l6 6v21h-20z" fill="#fff" stroke="#8e969c" />
    <path d="M20.500 3.500v6h6" fill="#e9ecee" stroke="#8e969c" />
    <path d="M9 18l5 6 10-11" fill="none" stroke="#ea5b1c" strokeWidth="3" />
  </Icon32>
);

const NewItemIcon = () => (
  <Icon16>
    <path d="M.5.5h9v6h-9z" fill="#d2ecfa" stroke="#6f8da8" />
    <path d="M0 1h10" stroke="#5f8fb8" strokeWidth="2" />
    <path d="M4.500 3.500h6v9h-6z" fill="#eef6fb" stroke="#7f909e" />
    <path d="M8.500 5.500h4l3 3v7h-7z" fill="#fff" stroke="#6f7b85" />
    <path d="M10 9h4M10 11h4M10 13h4" stroke="#9fb6e0" />
  </Icon16>
);

const EasyAccessIcon = () => (
  <Icon16>
    <path d="M4.500 3V.500h7l3 3v12h-10V9" fill="#fff" stroke="#7f8990" />
    <path d="M11.500.500v3h3" fill="none" stroke="#7f8990" />
    <path d="M2 2.500h5M1 5h5M0 7.500h4" stroke="#2f7dc0" strokeWidth="1.500" />
  </Icon16>
);

const OpenIcon = () => (
  <Icon16>
    <path d="M1.500.5h11v14h-11z" fill="#e9eff5" stroke="#a5b3c2" />
    <path d="M3 3h3v2H3zM3 7h3v2H3zM3 11h3v2H3zM8 3h3v1H8zM8 7h3v1H8z" fill="#8fa0b3" />
    <path d="M11 16v-4H8l4-4 4 4h-3v4z" fill="#8493a5" />
  </Icon16>
);

const EditIcon = () => (
  <Icon16>
    <path d="M1.500.5h8l3 3v12h-11z" fill="#f2f8fc" stroke="#b2c0cc" />
    <path d="M4 14l1-4 8-6 2 2-8 7z" fill="#b5cfe6" stroke="#a3b7ca" />
  </Icon16>
);

const HistoryIcon = () => (
  <Icon16>
    <path d="M.5.5h11v14H.5z" fill="#fbdf86" stroke="#efc95a" />
    <circle cx="11" cy="11" r="4.500" fill="#e4e8ec" stroke="#7a858f" />
    <path d="M11 8v3h3" fill="none" stroke="#555" />
    <path d="M9 5Q5 6 5 10H2l4 5 3-5H7Q7 7 10 6z" fill="#2ba03a" />
  </Icon16>
);

function SelectIcon({ picked }) {
  return (
    <Icon16>
      {[[0, 0], [8, 0], [0, 8], [8, 8]].map(([x, y], n) =>
        picked.includes(n) ? (
          <rect key={n} x={x + 0.5} y={y + 0.5} width="7" height="7" fill="#bfe9fb" stroke="#2b87dd" />
        ) : (
          <rect key={n} x={x + 1.5} y={y + 1.5} width="5" height="5" fill="#fff" stroke="#a6a3ad" />
        )
      )}
    </Icon16>
  );
}

const CrumbArrow = () => (
  <svg width="5" height="8" viewBox="0 0 5 8">
    <path d="M1 1l3 3-3 3" fill="none" stroke="#6e757a" strokeWidth="1.500" />
  </svg>
);

const ArrowGap = styled.span`
  display: flex;
  padding-left: 2px;
`;

function Small({ icon, label, arrow, ...rest }) {
  return (
    <SmallButton type="button" {...rest}>
      {icon}
      {label}
      {arrow && (
        <ArrowGap>
          <Arrow color={rest.$dim ? "#a5adb5" : undefined} />
        </ArrowGap>
      )}
    </SmallButton>
  );
}

/* ---------- explorer ---------- */

function RibbonBar() {
  return (
    <Ribbon>
      <ClippedGroup>
        <SmallList $end>
          <SmallButton type="button" $dim $inset={24}>复制路径</SmallButton>
          <SmallButton type="button" $dim>粘贴快捷方式</SmallButton>
        </SmallList>
      </ClippedGroup>
      <Group $right={7}>
        <GroupBody>
          <BigButton type="button" $dim><MoveIcon />移动到<Arrow color="#a5adb5" /></BigButton>
          <BigButton type="button" $dim><CopyIcon />复制到<Arrow color="#a5adb5" /></BigButton>
          <Divider />
          <BigButton type="button"><DeleteIcon />删除<Arrow /></BigButton>
          <BigButton type="button" $dim><RenameIcon />重命名</BigButton>
        </GroupBody>
        <GroupName>组织</GroupName>
      </Group>
      <Group $right={8}>
        <GroupBody>
          <BigButton type="button"><NewFolderIcon />新建<br />文件夹</BigButton>
          <SmallList $gap={4}>
            <Small icon={<NewItemIcon />} label="新建项目" arrow />
            <Small icon={<EasyAccessIcon />} label="轻松访问" arrow />
          </SmallList>
        </GroupBody>
        <GroupName>新建</GroupName>
      </Group>
      <Group $right={10}>
        <GroupBody>
          <BigButton type="button"><PropertiesIcon />属性<Arrow /></BigButton>
          <SmallList $gap={4} $tall>
            <Small icon={<OpenIcon />} label="打开" arrow $tall $dim />
            <Small icon={<EditIcon />} label="编辑" $tall $dim />
            <Small icon={<HistoryIcon />} label="历史记录" $tall />
          </SmallList>
        </GroupBody>
        <GroupName>打开</GroupName>
      </Group>
      <Group $left={7} $right={10}>
        <GroupBody>
          <SmallList>
            <Small icon={<SelectIcon picked={[0, 1, 2, 3]} />} label="全部选择" />
            <Small icon={<SelectIcon picked={[]} />} label="全部取消" />
            <Small icon={<SelectIcon picked={[1, 2]} />} label="反向选择" />
          </SmallList>
        </GroupBody>
        <GroupName>选择</GroupName>
      </Group>
    </Ribbon>
  );
}

function ExplorerWindow() {
  return (
    <Explorer>
      <TitleBar>
        <CaptionButton type="button" aria-label="最小化">
          <svg width="11" height="11"><path d="M0 5.500h11" stroke="#7b8489" /></svg>
        </CaptionButton>
        <CaptionButton type="button" aria-label="最大化">
          <svg width="11" height="11"><path d="M.5.5h9v9h-9z" fill="none" stroke="#6f7a80" /></svg>
        </CaptionButton>
        <CaptionButton type="button" aria-label="关闭">
          <svg width="11" height="11"><path d="M0 0l11 11M11 0L0 11" stroke="#6f7f8a" /></svg>
        </CaptionButton>
      </TitleBar>
      <TabRow>
        <Tab type="button">查看</Tab>
        <TabTool type="button" aria-label="折叠功能区">
          <svg width="9" height="6"><path d="M1 5l3.500-4L8 5" fill="none" stroke="#92989d" strokeWidth="1.500" /></svg>
        </TabTool>
        <TabTool type="button" aria-label="帮助">
          <svg width="16" height="16" viewBox="0 0 16 16">
            <circle cx="8" cy="8" r="7.500" fill="#0868c4" stroke="#0a4a8c" />
            <text x="8" y="12" fill="#fff" fontSize="12" fontWeight="bold" textAnchor="middle">?</text>
          </svg>
        </TabTool>
      </TabRow>
      <RibbonBar />
      <NavRow>
        <AddressBar aria-label="地址">
          <CrumbArrow />
          <Crumb href="#f">新加卷 (F:)</Crumb>
          <CrumbArrow />
          <Crumb href="#fold">Fold</Crumb>
          <AddressButton type="button" $push aria-label="历史位置">
            <svg width="10" height="7"><path d="M1 1l4 4 4-4" fill="none" stroke="#666e73" strokeWidth="2" /></svg>
          </AddressButton>
          <AddressButton type="button" aria-label="刷新">
            <svg width="12" height="12" viewBox="0 0 12 12">
              <path d="M3 3A4.200 4.200 0 1 0 9 3" fill="none" stroke="#70797e" strokeWidth="2" />
              <path d="M2 1h4v4" fill="none" stroke="#70797e" strokeWidth="1.500" />
            </svg>
          </AddressButton>
        </AddressBar>
        <SearchBox>
          <SearchInput type="search" aria-label="搜索" />
          <svg width="12" height="12" viewBox="0 0 12 12">
            <circle cx="7.500" cy="4.500" r="3.500" fill="none" stroke="#6e767b" strokeWidth="1.500" />
            <path d="M5 7L1 11" stroke="#6e767b" strokeWidth="2" />
          </svg>
        </SearchBox>
      </NavRow>
      <FileTable>
        <thead>
          <tr>
            <HeadCell $first $width="265px">
              名称
              <SortMark width="9" height="6"><path d="M1 5l3.500-4L8 5" fill="none" stroke="#5f666b" /></SortMark>
            </HeadCell>
            <HeadCell $width="144px">修改日期</HeadCell>
            <HeadCell $width="120px">类型</HeadCell>
            <HeadCell $width="80px">大小</HeadCell>
            <HeadCell as="td" $last />
          </tr>
        </thead>
        <tbody>
          <tr>
            <Cell>
              <FileName href="#ring">
                <svg width="16" height="16" viewBox="0 0 108 108"><Ring x={54} y={56} s={1.1} /></svg>
                Ring.jcd
              </FileName>
            </Cell>
            <Cell>2024-04-25 20:29</Cell>
            <Cell>JCAD Document</Cell>
            <Cell $right>461 KB</Cell>
            <Cell />
          </tr>
        </tbody>
      </FileTable>
      <StatusBar>
        <ViewButton type="button" $active aria-label="详细信息">
          <svg width="16" height="13" viewBox="0 0 16 13">
            <path d="M.5.5h4v12h-4zM.5 4.500h4M.5 8.500h4" fill="#fff" stroke="#9aa0a5" />
            <path d="M6 2.500h4M12 2.500h4M6 6.500h4M12 6.500h4M6 10.500h4M12 10.500h4" stroke="#667078" />
            <path d="M2 2h1v1H2z" fill="#555" />
            <path d="M2 6h1v1H2z" fill="#36c" />
            <path d="M2 10h1v1H2z" fill="#c22" />
          </svg>
        </ViewButton>
        <ViewButton type="button" aria-label="大图标">
          <svg width="14" height="11" viewBox="0 0 14 11">
            <path d="M.5.5h13v10H.5z" fill="#fff" stroke="#8c9298" />
            <path d="M2 2h10v4H2z" fill="#79b7ee" />
            <path d="M2 5l4 1 6 1v2H2z" fill="#3c5a78" />
            <path d="M2 4l4 2-4 2z" fill="#2c5a40" />
          </svg>
        </ViewButton>
      </StatusBar>
    </Explorer>
  );
}

export default function App() {
  return (
    <Page>
      <GlobalStyle />
      <Toolbar>
        <ToolStrip tools={topTools} />
        <ToolStrip tools={bottomTools} />
      </Toolbar>
      <Viewport>
        <ConstructionPlane />
        <ExplorerWindow />
      </Viewport>
    </Page>
  );
}
